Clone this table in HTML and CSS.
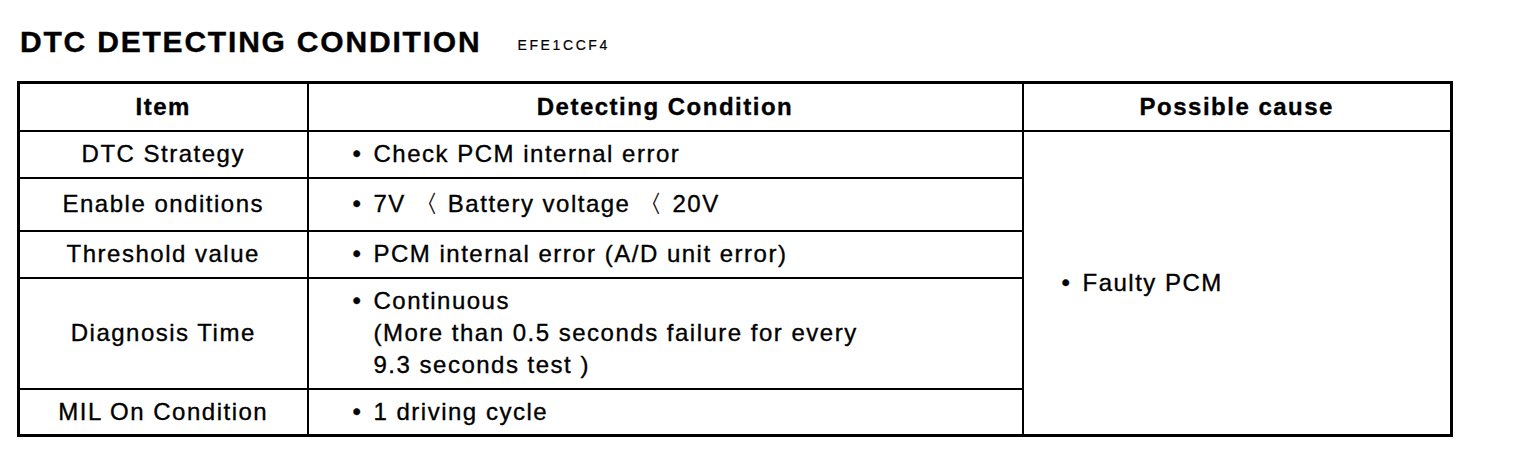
FILE: index.html
```html
<!DOCTYPE html>
<html>
<head>
<meta charset="utf-8">
<link rel="stylesheet" href="styles.css">
</head>
<body>
<div class="page">
  <h1 class="title">DTC DETECTING CONDITION <span class="code">EFE1CCF4</span></h1>
  <table class="dtc">
    <colgroup>
      <col class="c-item">
      <col class="c-cond">
      <col class="c-cause">
    </colgroup>
    <tr class="r-head">
      <th>Item</th>
      <th>Detecting Condition</th>
      <th>Possible cause</th>
    </tr>
    <tr class="r1">
      <td class="item">DTC Strategy</td>
      <td class="cond"><span class="bul">•</span>Check PCM internal error</td>
      <td class="cause" rowspan="5"><span class="bul">•</span>Faulty PCM</td>
    </tr>
    <tr class="r2">
      <td class="item">Enable onditions</td>
      <td class="cond"><span class="bul">•</span>7V<span class="lt">〈</span>Battery voltage<span class="lt">〈</span>20V</td>
    </tr>
    <tr class="r3">
      <td class="item">Threshold value</td>
      <td class="cond"><span class="bul">•</span>PCM internal error (A/D unit error)</td>
    </tr>
    <tr class="r4">
      <td class="item">Diagnosis Time</td>
      <td class="cond multi"><span class="bul">•</span>Continuous<br><span class="ind">(More than 0.5 seconds failure for every</span><br><span class="ind">9.3 seconds test )</span></td>
    </tr>
    <tr class="r5">
      <td class="item">MIL On Condition</td>
      <td class="cond"><span class="bul">•</span>1 driving cycle</td>
    </tr>
  </table>
</div>
</body>
</html>
```

FILE: styles.css
```css
html, body {
  margin: 0;
  padding: 0;
  background: #fff;
}
.page {
  padding: 25px 0 0 17px;
  font-family: "Liberation Sans", Arial, sans-serif;
  color: #000;
}
.title {
  margin: 0 0 0 3px;
  font-size: 30px;
  font-weight: bold;
  letter-spacing: 1.8px;
  line-height: 34px;
  height: 56px;
  -webkit-text-stroke: 0.4px #000;
}
.code {
  font-size: 14px;
  font-weight: normal;
  letter-spacing: 2.6px;
  margin-left: 26px;
  vertical-align: 2px;
  -webkit-text-stroke: 0.2px #000;
}
.dtc {
  border-collapse: collapse;
  border: 3px solid #000;
  width: 1433px;
  table-layout: fixed;
  font-size: 24px;
  letter-spacing: 1.5px;
  -webkit-text-stroke: 0.35px #000;
}
.c-item { width: 289px; }
.c-cond { width: 715px; }
.c-cause { width: 429px; }
.dtc th, .dtc td {
  border: 2px solid #000;
  padding: 0;
  line-height: 32px;
}
.dtc th {
  font-weight: bold;
  text-align: center;
}
.r-head { height: 48px; }
.r1 { height: 47px; }
.r2 { height: 53px; }
.r3 { height: 47px; }
.r4 { height: 111px; }
.r5 { height: 47px; }
.item {
  text-align: center;
}
.cond {
  padding-left: 44px !important;
  text-align: left;
}
.cause {
  padding-left: 38px !important;
  vertical-align: middle;
}
.bul {
  display: inline-block;
  width: 21px;
  letter-spacing: 0;
}
.lt {
  display: inline-block;
  margin: 0 10px 0 8px;
  letter-spacing: 0;
}
.ind {
  padding-left: 21px;
}
```
